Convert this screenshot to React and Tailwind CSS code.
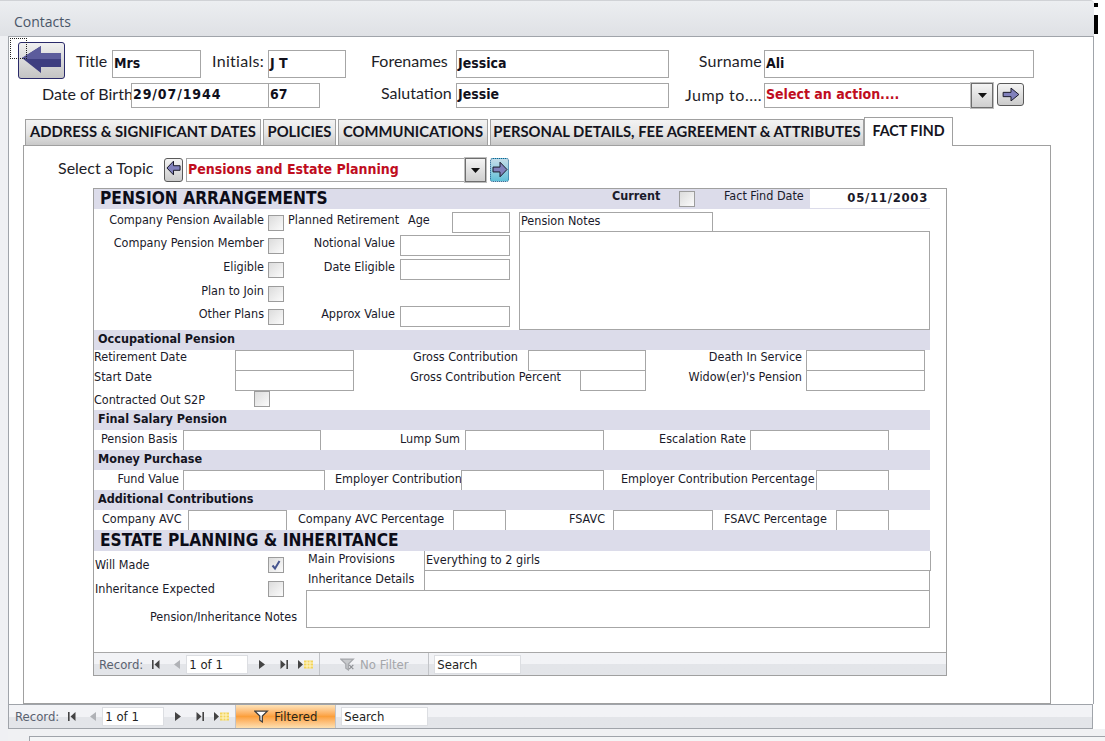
import React from "react";

const tah = "font-['DejaVu_Sans_Condensed','DejaVu_Sans',sans-serif]";

function T({ className = "", children }) {
  return <span className={"shrink-0 whitespace-nowrap text-[12.5px] leading-none text-[#1a1a2a] " + tah + " " + className}>{children}</span>;
}
function H({ className = "", children }) {
  return <span className={"shrink-0 whitespace-nowrap text-[16px] leading-none text-[#1e1e28] font-['Lato',sans-serif] " + className}>{children}</span>;
}
function Box({ className = "", children }) {
  return <div className={"shrink-0 border border-[#a6a6a6] bg-white flex items-center overflow-hidden " + className}>{children}</div>;
}
function Val({ children, className = "" }) {
  return <span className={"pl-[1px] pb-[2px] whitespace-nowrap text-[14px] font-bold text-[#10101c] " + tah + " " + className}>{children}</span>;
}
function Chk({ className = "", checked }) {
  return (
    <div className={"shrink-0 w-[16px] h-[16px] border border-[#9c9c9c] bg-gradient-to-br from-[#dcdcdc] to-[#fbfbfb] p-0 flex items-center justify-center " + className}>
      {checked && (
        <svg width="12" height="12" viewBox="0 0 12 12">
          <path d="M2.5 6.5 L5 9.5 L9.5 2" fill="none" stroke="#46558f" strokeWidth="2" />
        </svg>
      )}
    </div>
  );
}
function Arrow({ dir = "right", w = 16, h = 14, className = "", focus }) {
  const pts = dir === "right" ? "1,5 8,5 8,1 15,7 8,13 8,9 1,9" : "15,5 8,5 8,1 1,7 8,13 8,9 15,9";
  return (
    <div className={"shrink-0 flex items-center justify-center rounded-[3px] border " + (focus ? "border-dotted border-[#1c5a8a] bg-gradient-to-b from-[#c4dce8] to-[#5fc0d8] " : "border-[#5a5a5a] bg-gradient-to-b from-[#f4f4f4] to-[#cbcbcb] ") + className}>
      <svg width={w} height={h} viewBox="0 0 16 14" preserveAspectRatio="none">
        <polygon points={pts} fill="#8080bb" stroke="#1a1a2a" strokeWidth="1" vectorEffect="non-scaling-stroke" />
      </svg>
    </div>
  );
}
function Drop({ className = "" }) {
  return (
    <div className={"shrink-0 h-full border border-[#6e6e6e] outline outline-1 outline-[#bdbdbd] bg-gradient-to-b from-[#f4f4f4] to-[#cfcfcf] flex items-center justify-center " + className}>
      <svg width="9" height="5" viewBox="0 0 9 5"><polygon points="0,0 9,0 4.5,5" fill="#111" /></svg>
    </div>
  );
}
function Band({ children, className = "" }) {
  return <div className={"shrink-0 w-[836px] bg-[#dcdcea] flex items-center " + className}>{children}</div>;
}
function BandLabel({ children }) {
  return <span className={"ml-[4px] pb-[2px] text-[12.5px] font-bold leading-none text-[#14141e] " + tah}>{children}</span>;
}
function BigLabel({ children, className = "" }) {
  return <span className={"shrink-0 whitespace-nowrap text-[17.2px] font-bold leading-none text-[#0c0c18] " + tah + " " + className}>{children}</span>;
}
function Tab({ className = "", children, active }) {
  return (
    <div className={"shrink-0 flex items-center justify-center border border-[#a0a0a0] " + (active ? "h-[29px] pb-[3px] bg-white border-b-0 relative z-10 " : "h-[27px] pb-[2px] bg-gradient-to-b from-[#f3f3f3] via-[#e6e6e6] to-[#c9c9c9] ") + className}>
      <span className={"whitespace-nowrap font-bold text-[#141420] font-['Lato',sans-serif] " + (active ? "text-[14.3px]" : "text-[14.8px]")}>{children}</span>
    </div>
  );
}
function First() {
  return <svg width="8" height="9" viewBox="0 0 8 9"><rect x="0" y="0" width="1.6" height="9" fill="#444" /><polygon points="7.5,0 2.5,4.5 7.5,9" fill="#444" /></svg>;
}
function Prev() {
  return <svg width="6" height="9" viewBox="0 0 6 9"><polygon points="6,0 0,4.5 6,9" fill="#b0b2b6" /></svg>;
}
function Next() {
  return <svg width="6" height="9" viewBox="0 0 6 9"><polygon points="0,0 6,4.5 0,9" fill="#444" /></svg>;
}
function Last() {
  return <svg width="8" height="9" viewBox="0 0 8 9"><rect x="6.4" y="0" width="1.6" height="9" fill="#444" /><polygon points="0.5,0 5.5,4.5 0.5,9" fill="#444" /></svg>;
}
function New() {
  return (
    <svg width="15" height="9" viewBox="0 0 15 9">
      <polygon points="0,0 5,4.5 0,9" fill="#444" />
      <rect x="6" y="0.5" width="9" height="8" fill="#f2d45c" />
      <path d="M6 3 H15 M6 6 H15 M9 0.5 V8.5 M12 0.5 V8.5" stroke="#fff5c8" strokeWidth="1" />
    </svg>
  );
}
function Funnel({ off }) {
  const c = off ? "#a4a6aa" : "#3c3c3c";
  return (
    <svg width="15" height="13" viewBox="0 0 18 15">
      <polygon points="1,1 16,1 10,7 10,14 7,12 7,7" fill={off ? "#c8cacd" : "#fff"} stroke={c} strokeWidth="1.5" />
      {off && <path d="M11 8 L16 13 M16 8 L11 13" stroke="#8e9094" strokeWidth="1.5" />}
    </svg>
  );
}
function NavText({ className = "", children }) {
  return <span className={"shrink-0 whitespace-nowrap text-[13px] leading-none " + tah + " " + className}>{children}</span>;
}
function NavBar({ sub }) {
  return (
    <div className={"flex items-center shrink-0 bg-gradient-to-b from-[#f2f3f6] from-50% to-[#e3e5e9] to-50% " + (sub ? "h-[23px] border-t border-[#a8a8a8] " : "h-[25px] border border-[#a0a4aa] w-[1085px] ")}>
      <NavText className={"text-[#5a6270] " + (sub ? "ml-[5px]" : "ml-[6px]")}>Record:</NavText>
      <div className="ml-[9px] flex"><First /></div>
      <div className="ml-[14px] flex"><Prev /></div>
      <div className="ml-[6px] w-[62px] h-[19px] bg-white border border-[#dcdee2] flex items-center pl-[2px] shrink-0">
        <NavText className="text-[#222]">1 of 1</NavText>
      </div>
      <div className="ml-[11px] flex"><Next /></div>
      <div className="ml-[15px] flex"><Last /></div>
      <div className="ml-[10px] flex"><New /></div>
      {sub ? (
        <div className="ml-[6px] w-[110px] h-full border-x border-[#c2c4c8] flex items-center justify-center gap-[5px] shrink-0">
          <Funnel off />
          <NavText className="text-[#a4a6aa]">No Filter</NavText>
        </div>
      ) : (
        <div className="ml-[6px] w-[101px] h-full border-x border-[#c2c4c8] flex items-center justify-center gap-[5px] shrink-0 bg-gradient-to-b from-[#fde3b8] via-[#fb9f3a] to-[#fde0b0]">
          <Funnel />
          <NavText className="text-[#2a2418]">Filtered</NavText>
        </div>
      )}
      <div className="ml-[5px] w-[87px] h-[19px] bg-white border border-[#dcdee2] flex items-center pl-[2px] shrink-0">
        <NavText className="text-[#222]">Search</NavText>
      </div>
    </div>
  );
}

function SubForm() {
  return (
    <div className="ml-[69px] mt-[6px] w-[854px] h-[488px] border border-[#a0a0a0] flex flex-col shrink-0">
      <div className="flex-1 flex flex-col min-h-0">
        <Band className="h-[20px] border-b border-b-[#dcdcea]">
          <BigLabel className="ml-[6px] w-[512px]">PENSION ARRANGEMENTS</BigLabel>
          <T className="font-bold w-[51px] pb-[4px]">Current</T>
          <Chk className="ml-[16px]" />
          <T className="ml-[29px] w-[86px] pb-[4px]">Fact Find Date</T>
          <div className="w-[120px] h-[19px] self-start bg-white flex items-center justify-end pr-[2px] shrink-0">
            <T className="font-bold text-[13px] tracking-[0.7px] pb-[2px]">05/11/2003</T>
          </div>
        </Band>

        <div className="h-[121px] flex shrink-0">
          <div className="w-[416px] pt-[3px] shrink-0 flex flex-col">
            <div className="h-[21px] flex items-center [&>span]:pb-[4px]">
              <T className="w-[170px] text-right">Company Pension Available</T>
              <Chk className="ml-[4px]" />
              <T className="ml-[4px] w-[112px]">Planned Retirement</T>
              <T className="ml-[8px] w-[22px]">Age</T>
              <Box className="ml-[22px] w-[58px] h-[21px]" />
            </div>
            <div className="mt-[2px] h-[21px] flex items-center [&>span]:pb-[4px]">
              <T className="w-[170px] text-right">Company Pension Member</T>
              <Chk className="ml-[4px]" />
              <T className="w-[111px] text-right">Notional Value</T>
              <Box className="ml-[5px] w-[110px] h-[21px]" />
            </div>
            <div className="mt-[3px] h-[21px] flex items-center [&>span]:pb-[4px]">
              <T className="w-[170px] text-right">Eligible</T>
              <Chk className="ml-[4px]" />
              <T className="w-[111px] text-right">Date Eligible</T>
              <Box className="ml-[5px] w-[110px] h-[21px]" />
            </div>
            <div className="mt-[3px] h-[21px] flex items-center [&>span]:pb-[4px]">
              <T className="w-[170px] text-right">Plan to Join</T>
              <Chk className="ml-[4px]" />
            </div>
            <div className="mt-[2px] h-[21px] flex items-center [&>span]:pb-[4px]">
              <T className="w-[170px] text-right">Other Plans</T>
              <Chk className="ml-[4px]" />
              <T className="w-[111px] text-right">Approx Value</T>
              <Box className="ml-[5px] w-[110px] h-[21px]" />
            </div>
          </div>
          <div className="ml-[9px] w-[411px] pt-[3px] flex flex-col shrink-0">
            <Box className="w-[194px] h-[20px] pl-[1px]"><T className="pb-[1px]">Pension Notes</T></Box>
            <Box className="-mt-px w-[411px] h-[99px]" />
          </div>
        </div>

        <Band className="h-[20px]"><BandLabel>Occupational Pension</BandLabel></Band>
        <div className="h-[21px] flex items-center shrink-0 [&>span]:pb-[6px]">
          <T className="w-[141px]">Retirement Date</T>
          <Box className="w-[119px] h-[21px]" />
          <T className="w-[164px] text-right">Gross Contribution</T>
          <Box className="ml-[10px] w-[118px] h-[21px]" />
          <T className="w-[156px] text-right">Death In Service</T>
          <Box className="ml-[4px] w-[119px] h-[21px]" />
        </div>
        <div className="-mt-px h-[21px] flex items-center shrink-0 [&>span]:pb-[6px]">
          <T className="w-[141px]">Start Date</T>
          <Box className="w-[119px] h-[21px]" />
          <T className="w-[207px] text-right">Gross Contribution Percent</T>
          <Box className="ml-[19px] w-[66px] h-[21px]" />
          <T className="w-[156px] text-right">Widow(er)'s Pension</T>
          <Box className="ml-[4px] w-[119px] h-[21px]" />
        </div>
        <div className="h-[19px] flex items-start shrink-0">
          <T className="w-[160px] mt-[3px]">Contracted Out S2P</T>
          <Chk />
        </div>

        <Band className="h-[20px]"><BandLabel>Final Salary Pension</BandLabel></Band>
        <div className="h-[21px] flex items-center shrink-0 [&>span]:pb-[2px]">
          <T className="ml-[7px] w-[78px]">Pension Basis</T>
          <Box className="ml-[4px] w-[138px] h-[21px]" />
          <T className="ml-[79px] w-[61px]">Lump Sum</T>
          <Box className="ml-[4px] w-[139px] h-[21px]" />
          <T className="w-[142px] text-right">Escalation Rate</T>
          <Box className="ml-[4px] w-[139px] h-[21px]" />
        </div>

        <Band className="-mt-px h-[20px]"><BandLabel>Money Purchase</BandLabel></Band>
        <div className="h-[21px] flex items-center shrink-0 [&>span]:pb-[2px]">
          <T className="w-[85px] text-right">Fund Value</T>
          <Box className="ml-[4px] w-[142px] h-[21px]" />
          <T className="ml-[10px] w-[126px]">Employer Contribution</T>
          <Box className="w-[143px] h-[21px]" />
          <T className="ml-[17px] w-[194px]">Employer Contribution Percentage</T>
          <Box className="ml-[1px] w-[73px] h-[21px]" />
        </div>

        <Band className="-mt-px h-[20px]"><BandLabel>Additional Contributions</BandLabel></Band>
        <div className="h-[21px] flex items-center shrink-0 [&>span]:pb-[2px]">
          <T className="ml-[8px] w-[82px]">Company AVC</T>
          <Box className="ml-[4px] w-[99px] h-[21px]" />
          <T className="ml-[11px] w-[149px]">Company AVC Percentage</T>
          <Box className="ml-[6px] w-[53px] h-[21px]" />
          <T className="ml-[63px] w-[40px]">FSAVC</T>
          <Box className="ml-[4px] w-[100px] h-[21px]" />
          <T className="ml-[11px] w-[108px]">FSAVC Percentage</T>
          <Box className="ml-[4px] w-[53px] h-[21px]" />
        </div>

        <Band className="-mt-px h-[21px]"><BigLabel className="ml-[6px]">ESTATE PLANNING &amp; INHERITANCE</BigLabel></Band>
        <div className="flex shrink-0">
          <div className="w-[212px] pt-[6px] flex flex-col shrink-0">
            <div className="flex items-center">
              <T className="ml-[1px] w-[173px]">Will Made</T>
              <Chk checked />
            </div>
            <div className="mt-[8px] flex items-center">
              <T className="ml-[1px] w-[173px]">Inheritance Expected</T>
              <Chk />
            </div>
            <T className="mt-[14px] w-[203px] text-right">Pension/Inheritance Notes</T>
          </div>
          <div className="w-[625px] flex flex-col shrink-0">
            <div className="h-[20px] flex items-start">
              <T className="ml-[2px] w-[116px] mt-[2px]">Main Provisions</T>
              <Box className="w-[507px] h-[20px] pl-[1px] border-t-0"><T className="pb-[1px]">Everything to 2 girls</T></Box>
            </div>
            <div className="h-[20px] flex items-start">
              <T className="ml-[2px] w-[116px] mt-[2px]">Inheritance Details</T>
              <Box className="-mt-px w-[506px] h-[21px]" />
            </div>
            <Box className="-mt-px w-[624px] h-[38px]" />
          </div>
        </div>
      </div>
      <NavBar sub />
    </div>
  );
}

export default function App() {
  return (
    <div className="relative w-[1105px] h-[741px] overflow-hidden bg-white flex flex-col">
      <div className="w-[1094px] h-[36px] shrink-0 rounded-tr-[4px] bg-gradient-to-b from-[#eceef1] to-[#dfe1e5] flex items-center pl-[14px] pt-[6px] border-t border-[#d0d2d6]">
        <span className="text-[14px] text-[#4a5668] font-['Open_Sans',sans-serif]">Contacts</span>
      </div>
      <div className="absolute left-[1094px] top-[3px] w-[4px] h-[4px] bg-black" />
      <div className="absolute left-[1094px] top-[15px] w-[4px] h-[19px] bg-black" />

      <div className="flex flex-1 min-h-0">
        <div className="w-[8px] shrink-0 bg-[#eff0f3]" />
        <div className="flex-1 min-w-0 flex flex-col">
          <div className="w-[1086px] h-[668px] shrink-0 border-x border-t border-[#a0a4aa] bg-white flex flex-col relative">
            <div className="absolute left-[1px] top-[1px] w-[17px] h-[21px] border border-dotted border-[#222] z-20" />

            <div className="mt-[13px] h-[28px] flex items-start shrink-0">
              <div className="relative z-10 ml-[9px] -mt-[8px] w-[47px] h-[37px] shrink-0 rounded-[3px] border border-[#2a2a6a] bg-gradient-to-b from-[#f0f0f0] to-[#c4c4c4]">
                <svg width="45" height="35" viewBox="0 0 45 35">
                  <polygon points="3,15 22,3 22,10 42,10 42,24 22,24 22,30" fill="#3e3e80" />
                  <polygon points="3,15 22,3 22,10 42,10 42,16 5,16" fill="#5c5c9c" />
                </svg>
              </div>
              <H className="ml-[11px] w-[32px] mt-[3px]">Title</H>
              <Box className="ml-[4px] w-[89px] h-[28px]"><Val>Mrs</Val></Box>
              <H className="ml-[11px] w-[53px] mt-[3px] tracking-[0.3px]">Initials:</H>
              <Box className="ml-[3px] w-[78px] h-[28px]"><Val>J T</Val></Box>
              <H className="ml-[25px] w-[81px] mt-[3px]">Forenames</H>
              <Box className="ml-[4px] w-[213px] h-[28px]"><Val>Jessica</Val></Box>
              <H className="ml-[29px] w-[64px] text-right mt-[3px] tracking-[0.2px]">Surname</H>
              <Box className="ml-[2px] w-[270px] h-[28px]"><Val>Ali</Val></Box>
            </div>

            <div className="mt-[5px] h-[25px] flex items-start shrink-0">
              <H className="ml-[33px] w-[87px] mt-[3px] text-[15.5px]">Date of Birth</H>
              <Box className="ml-[2px] w-[138px] h-[25px]"><Val className="tracking-[0.9px]">29/07/1944</Val></Box>
              <Box className="-ml-px w-[52px] h-[25px]"><Val>67</Val></Box>
              <H className="ml-[61px] w-[71px] mt-[2px]">Salutation</H>
              <Box className="ml-[4px] w-[213px] h-[25px]"><Val>Jessie</Val></Box>
              <H className="ml-[15px] w-[78px] text-right mt-[4px] tracking-[0.5px]">Jump to....</H>
              <Box className="ml-[2px] w-[207px] h-[25px] border-r-0"><Val className="text-[#c00d1e] text-[14.6px]">Select an action....</Val></Box>
              <Drop className="w-[22px] h-[25px]" />
              <Arrow className="ml-[4px] w-[27px] h-[23px]" w={18} h={15} />
            </div>

            <div className="mt-[9px] h-[29px] flex items-end shrink-0">
              <Tab className="ml-[16px] w-[236px]">ADDRESS &amp; SIGNIFICANT DATES</Tab>
              <Tab className="ml-[2px] w-[73px]">POLICIES</Tab>
              <Tab className="ml-[2px] w-[150px]">COMMUNICATIONS</Tab>
              <Tab className="ml-[2px] w-[374px]">PERSONAL DETAILS, FEE AGREEMENT &amp; ATTRIBUTES</Tab>
              <Tab active className="w-[89px]">FACT FIND</Tab>
            </div>

            <div className="-mt-px ml-[14px] w-[1028px] flex-1 min-h-0 border border-[#a0a0a0] flex flex-col">
              <div className="mt-[12px] h-[24px] flex items-center shrink-0">
                <H className="ml-[34px] w-[95px] pb-[4px]">Select a Topic</H>
                <Arrow dir="left" className="ml-[11px] w-[19px] h-[24px] pb-[4px]" w={15} h={16} />
                <Box className="ml-[3px] w-[279px] h-[24px] border-r-0"><Val className="text-[#c00d1e] text-[13.7px]">Pensions and Estate Planning</Val></Box>
                <Drop className="w-[21px]" />
                <Arrow focus className="ml-[4px] w-[19px] h-[24px] pb-[2px]" w={16} h={17} />
              </div>
              <SubForm />
            </div>
          </div>

          <NavBar />
          <div className="flex-1 min-h-0 bg-[#f0f1f3] pt-[7px] pl-[21px]">
            <div className="h-full border-t border-l border-[#a0a4aa] bg-[#f4f5f6]" />
          </div>
        </div>
      </div>
    </div>
  );
}
